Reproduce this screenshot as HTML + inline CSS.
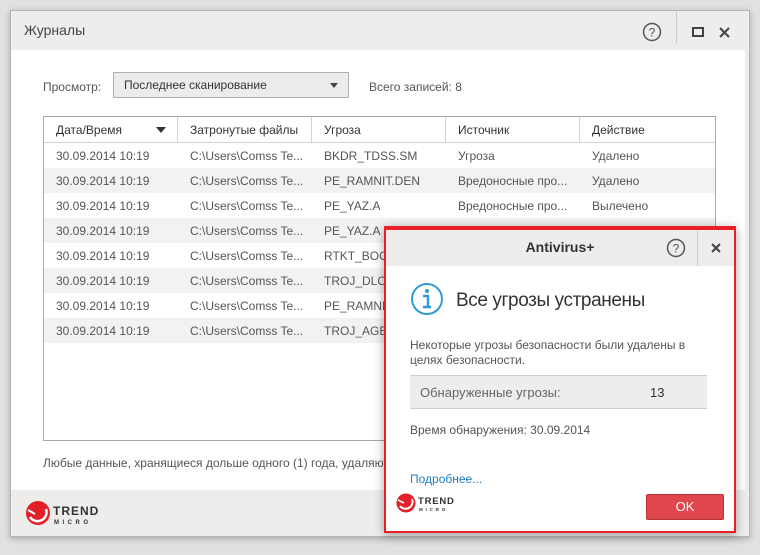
<!DOCTYPE html>
<html><head><meta charset="utf-8">
<style>
*{margin:0;padding:0;box-sizing:border-box}
body{width:760px;height:555px;background:#e1e1e1;font-family:"Liberation Sans","DejaVu Sans",sans-serif;position:relative;overflow:hidden;color:#444}
.abs{position:absolute}
#win{left:10px;top:10px;width:740px;height:527px;background:#eeedeb;border:1px solid #b5b5b5;box-shadow:0 2px 6px rgba(0,0,0,.25)}
#white{left:11px;top:50px;width:734px;height:440px;background:#fff}
.t{font-size:12px;white-space:nowrap}
#table{left:43px;top:116px;width:673px;height:325px;border:1px solid #a8a8a8;background:#fff}
.row{position:absolute;left:0;width:671px;height:25px}
.row span{position:absolute;top:6px;font-size:12px;color:#555;white-space:nowrap}
.hdr span{color:#333}
.vsep{position:absolute;top:0;width:1px;height:25px;background:#d4d4d4}
#pop{left:384px;top:226px;width:352px;height:307px;border:2px solid #e8202a;border-top-width:4px;background:#fff;box-shadow:0 2px 10px rgba(0,0,0,.35)}
</style></head><body>
<div id="win" class="abs"></div>
<div class="abs t" style="left:24px;top:22px;font-size:14px;color:#444">Журналы</div>
<svg class="abs" style="left:642px;top:22px" width="20" height="20" viewBox="0 0 20 20"><circle cx="10" cy="10" r="8.5" fill="none" stroke="#555" stroke-width="1.5"/><text x="10" y="14.5" font-size="12" text-anchor="middle" fill="#555" font-family="Liberation Sans">?</text></svg>
<div class="abs" style="left:676px;top:10px;width:1px;height:34px;background:#ccc"></div>
<div class="abs" style="left:692px;top:27px;width:12px;height:10px;border:2px solid #444"></div>
<svg class="abs" style="left:719px;top:27px" width="11" height="11"><path d="M1 1L10 10M10 1L1 10" stroke="#444" stroke-width="2"/></svg>
<div id="white" class="abs"></div>
<div class="abs t" style="left:43px;top:80px;color:#555">Просмотр:</div>
<div class="abs" style="left:113px;top:72px;width:236px;height:26px;background:#ececec;border:1px solid #b0b0b0"></div>
<div class="abs t" style="left:124px;top:78px;color:#333">Последнее сканирование</div>
<svg class="abs" style="left:330px;top:83px" width="9" height="6"><path d="M0 0H8L4 5Z" fill="#444"/></svg>
<div class="abs t" style="left:369px;top:80px;color:#555">Всего записей: 8</div>
<div id="table" class="abs">
<div class="row hdr" style="top:0;border-bottom:1px solid #d4d4d4;height:26px"><span style="left:12px">Дата/Время</span><svg style="position:absolute;left:112px;top:10px" width="10" height="7"><path d="M0 0H10L5 6Z" fill="#333"/></svg><div class="vsep" style="left:133px"></div><span style="left:146px">Затронутые файлы</span><div class="vsep" style="left:267px"></div><span style="left:280px">Угроза</span><div class="vsep" style="left:401px"></div><span style="left:414px">Источник</span><div class="vsep" style="left:535px"></div><span style="left:548px">Действие</span></div>
<div class="row" style="top:26px"><span style="left:12px">30.09.2014 10:19</span><span style="left:146px">C:\Users\Comss Te...</span><span style="left:280px">BKDR_TDSS.SM</span><span style="left:414px">Угроза</span><span style="left:548px">Удалено</span></div>
<div class="row" style="top:51px;background:#f2f2f2"><span style="left:12px">30.09.2014 10:19</span><span style="left:146px">C:\Users\Comss Te...</span><span style="left:280px">PE_RAMNIT.DEN</span><span style="left:414px">Вредоносные про...</span><span style="left:548px">Удалено</span></div>
<div class="row" style="top:76px"><span style="left:12px">30.09.2014 10:19</span><span style="left:146px">C:\Users\Comss Te...</span><span style="left:280px">PE_YAZ.A</span><span style="left:414px">Вредоносные про...</span><span style="left:548px">Вылечено</span></div>
<div class="row" style="top:101px;background:#f2f2f2"><span style="left:12px">30.09.2014 10:19</span><span style="left:146px">C:\Users\Comss Te...</span><span style="left:280px">PE_YAZ.A</span></div>
<div class="row" style="top:126px"><span style="left:12px">30.09.2014 10:19</span><span style="left:146px">C:\Users\Comss Te...</span><span style="left:280px">RTKT_BOOT</span></div>
<div class="row" style="top:151px;background:#f2f2f2"><span style="left:12px">30.09.2014 10:19</span><span style="left:146px">C:\Users\Comss Te...</span><span style="left:280px">TROJ_DLOAD</span></div>
<div class="row" style="top:176px"><span style="left:12px">30.09.2014 10:19</span><span style="left:146px">C:\Users\Comss Te...</span><span style="left:280px">PE_RAMNIT</span></div>
<div class="row" style="top:201px;background:#f2f2f2"><span style="left:12px">30.09.2014 10:19</span><span style="left:146px">C:\Users\Comss Te...</span><span style="left:280px">TROJ_AGENT</span></div>
</div>
<div class="abs t" style="left:43px;top:456px;color:#555">Любые данные, хранящиеся дольше одного (1) года, удаляются</div>
<svg class="abs" style="left:25px;top:500px" width="80" height="28" viewBox="0 0 80 28"><circle cx="13" cy="13" r="12" fill="#e22028"/><path d="M5 17A9 9 0 0 0 21 9" stroke="#fff" stroke-width="2.5" fill="none"/><path d="M3 10L10 14" stroke="#fff" stroke-width="2"/><text x="28" y="15" font-size="12" font-weight="bold" fill="#333" font-family="Liberation Sans" letter-spacing="1">TREND</text><text x="29" y="24" font-size="6" font-weight="bold" fill="#333" font-family="Liberation Sans" letter-spacing="3.5">MICRO</text></svg>

<div id="pop" class="abs">
<div class="abs" style="left:0;top:0;width:348px;height:36px;background:#eeedeb"></div>
<div class="abs" style="left:0;top:9px;width:348px;text-align:center;font-size:14px;font-weight:bold;color:#333">Antivirus+</div>
<svg class="abs" style="left:280px;top:8px" width="20" height="20" viewBox="0 0 20 20"><circle cx="10" cy="10" r="8.5" fill="none" stroke="#555" stroke-width="1.5"/><text x="10" y="14.5" font-size="12" text-anchor="middle" fill="#555" font-family="Liberation Sans">?</text></svg>
<div class="abs" style="left:311px;top:0;width:1px;height:36px;background:#ccc"></div>
<svg class="abs" style="left:325px;top:13px" width="10" height="10"><path d="M1 1L9 9M9 1L1 9" stroke="#444" stroke-width="2"/></svg>
<svg class="abs" style="left:24px;top:52px" width="34" height="34" viewBox="0 0 34 34"><circle cx="17" cy="17" r="15" fill="none" stroke="#2f9ad6" stroke-width="2"/><circle cx="17" cy="9" r="2" fill="#2f9ad6"/><path d="M13 14H18V25H21M13 25H21" stroke="#2f9ad6" stroke-width="2.4" fill="none"/></svg>
<div class="abs" style="left:70px;top:60px;font-size:19px;color:#333;white-space:nowrap;letter-spacing:-.4px">Все угрозы устранены</div>
<div class="abs" style="left:24px;top:108px;font-size:12px;color:#555;line-height:15px;width:300px">Некоторые угрозы безопасности были удалены в целях безопасности.</div>
<div class="abs" style="left:24px;top:145px;width:297px;height:34px;background:#eeedeb;border-top:1px solid #ccc;border-bottom:1px solid #ccc"></div>
<div class="abs t" style="left:34px;top:155px;font-size:13px;color:#666">Обнаруженные угрозы:</div>
<div class="abs t" style="left:264px;top:155px;font-size:13px;color:#333">13</div>
<div class="abs t" style="left:24px;top:193px;color:#555">Время обнаружения: 30.09.2014</div>
<div class="abs t" style="left:24px;top:242px;color:#1a7fc4">Подробнее...</div>
<svg class="abs" style="left:10px;top:262px" width="60" height="22" viewBox="0 0 60 22"><circle cx="10" cy="11" r="9.5" fill="#e22028"/><path d="M4 14A7 7 0 0 0 16 7" stroke="#fff" stroke-width="2" fill="none"/><path d="M2 8L8 11" stroke="#fff" stroke-width="1.6"/><text x="22" y="12" font-size="9.5" font-weight="bold" fill="#333" font-family="Liberation Sans" letter-spacing=".8">TREND</text><text x="23" y="19" font-size="4.5" font-weight="bold" fill="#333" font-family="Liberation Sans" letter-spacing="2.8">MICRO</text></svg>
<div class="abs" style="left:260px;top:264px;width:78px;height:26px;background:#e0474d;border:1px solid #b93036;border-radius:2px;color:#fff;font-size:13px;text-align:center;line-height:24px">OK</div>
</div>
</body></html>
